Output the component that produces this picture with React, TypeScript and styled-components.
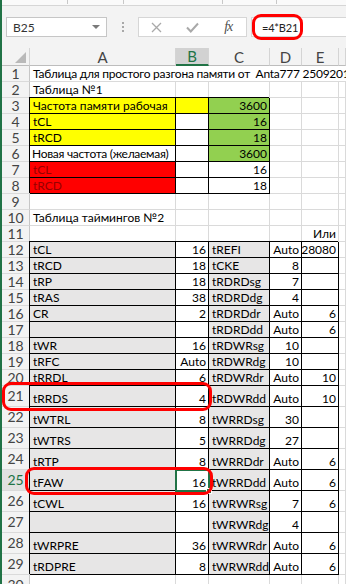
import React from 'react'
import styled, { createGlobalStyle, css } from 'styled-components'

type Align = 'left' | 'right' | 'center'

type CellData = {
  text?: string
  bg?: string
  color?: string
  align?: Align
  boxed?: boolean
  selected?: boolean
  tight?: boolean
}

type RowData = {
  n: number
  wide?: string
  cells: CellData[]
}

const YELLOW = '#ffff00'
const GREEN = '#92d050'
const RED = '#ff0000'
const DARK_RED = '#960000'
const GRAY = '#e7e6e6'
const XL_GREEN = '#217346'

const GlobalStyle = createGlobalStyle`
  *, *::before, *::after { box-sizing: border-box; }
  html, body { margin: 0; padding: 0; background: #fff; }
  body {
    width: 346px;
    height: 584px;
    overflow: hidden;
    font-family: Lato, 'Noto Sans', sans-serif;
  }
`

const Window = styled.div`
  display: flex;
  width: 346px;
  height: 584px;
  overflow: hidden;
`

const GreenEdge = styled.div`
  flex: none;
  width: 2px;
  background: ${XL_GREEN};
`

const Main = styled.div`
  flex: 1;
  min-width: 0;
  display: flex;
  flex-direction: column;
`

const Ribbon = styled.div`
  flex: none;
  height: 48px;
  background: #f3f3f3;
  display: flex;
  flex-direction: column;
`

const RibbonEdge = styled.div`
  height: 6px;
  background: #fafafa;
  border-bottom: 1px solid #d6d6d6;
  display: flex;
`

const GroupTick = styled.div<{ $w: number }>`
  flex: none;
  width: ${(p) => p.$w}px;
  height: 4px;
  border-right: 1px solid #c8c8c8;
`

const FormulaRow = styled.div`
  display: flex;
  align-items: center;
  height: 20px;
  margin-top: 11px;
  padding-left: 4px;
`

const NameBox = styled.div`
  flex: none;
  width: 101px;
  height: 20px;
  background: #fff;
  border: 1px solid #c6c6c6;
  display: flex;
  align-items: center;
  justify-content: space-between;
  padding: 0 6px 0 6px;
  font-size: 12px;
  color: #333;
`

const DropArrow = styled.span`
  width: 0;
  height: 0;
  border-left: 4px solid transparent;
  border-right: 4px solid transparent;
  border-top: 4px solid #7a7a7a;
`

const Grip = styled.div`
  flex: none;
  width: 31px;
  display: flex;
  flex-direction: column;
  align-items: center;
  gap: 2px;
`

const GripDot = styled.span`
  width: 2px;
  height: 2px;
  background: #a8a8a8;
`

const FxButtons = styled.div`
  flex: none;
  width: 109px;
  height: 20px;
  background: #fff;
  border: 1px solid #d6d6d6;
  display: flex;
`

const FxButton = styled.div`
  flex: 1;
  display: flex;
  align-items: center;
  justify-content: center;
`

const FxLabel = styled.span`
  font-family: 'Liberation Serif', serif;
  font-style: italic;
  font-size: 14px;
  color: #505050;
  letter-spacing: -1px;
`

const FormulaInput = styled.div`
  position: relative;
  flex: 1;
  height: 20px;
  margin-left: 4px;
  background: #fff;
  border: 1px solid #d6d6d6;
  border-right: none;
  display: flex;
  align-items: center;
  padding-left: 10px;
  font-size: 11px;
  letter-spacing: -0.2px;
  color: #222;
`

const Annotation = styled.div<{ $left: number; $top: number; $w: number; $h: number }>`
  position: absolute;
  left: ${(p) => p.$left}px;
  top: ${(p) => p.$top}px;
  width: ${(p) => p.$w}px;
  height: ${(p) => p.$h}px;
  border: 3px solid #f00;
  border-radius: 9px;
  pointer-events: none;
  z-index: 3;
`

const Sheet = styled.div`
  position: relative;
  flex: 1;
  display: grid;
  grid-template-columns: 28px 146px 33px 61px 32px 37px 1fr;
  grid-template-rows: 18px repeat(20, 16px) repeat(10, 21px);
  background: #fff;
`

const Corner = styled.div`
  background: #f3f3f3;
  border-right: 1px solid #d4d4d4;
  border-bottom: 1px solid #bdbdbd;
  display: flex;
  align-items: flex-end;
  justify-content: flex-end;
  padding: 0 3px 2px 0;
`

const CornerMark = styled.span`
  width: 0;
  height: 0;
  border-left: 11px solid transparent;
  border-bottom: 11px solid #b9b9b9;
`

const ColHead = styled.div<{ $active?: boolean }>`
  display: flex;
  align-items: center;
  justify-content: center;
  font-size: 15px;
  line-height: 16px;
  background: ${(p) => (p.$active ? '#d2d2d2' : '#f3f3f3')};
  color: ${(p) => (p.$active ? XL_GREEN : '#444')};
  border-right: 1px solid #d4d4d4;
  border-bottom: ${(p) => (p.$active ? `2px solid ${XL_GREEN}` : '1px solid #bdbdbd')};
`

const RowHead = styled.div<{ $active?: boolean }>`
  display: flex;
  align-items: center;
  justify-content: center;
  font-size: 14px;
  line-height: 14px;
  background: ${(p) => (p.$active ? '#e1e1e1' : '#f3f3f3')};
  color: ${(p) => (p.$active ? XL_GREEN : '#444')};
  border-right: 1px solid #c6c6c6;
  border-bottom: 1px solid #dadada;
`

const Cell = styled.div<{
  $bg?: string
  $color?: string
  $align?: Align
  $boxed?: boolean
  $selected?: boolean
  $wide?: boolean
  $tight?: boolean
}>`
  display: flex;
  align-items: flex-end;
  justify-content: ${(p) =>
    p.$align === 'right' ? 'flex-end' : p.$align === 'center' ? 'center' : 'flex-start'};
  padding: 0 2px 0 3px;
  background: ${(p) => p.$bg || '#fff'};
  color: ${(p) => p.$color || '#000'};
  font-size: 12px;
  line-height: 14px;
  white-space: pre;
  overflow: hidden;
  border-right: 1px solid ${(p) => (p.$boxed ? '#000' : '#dadada')};
  border-bottom: 1px solid ${(p) => (p.$boxed ? '#000' : '#dadada')};
  ${(p) =>
    p.$boxed &&
    css`
      box-shadow: -1px -1px 0 #000;
    `}
  ${(p) =>
    p.$tight &&
    css`
      letter-spacing: -0.3px;
      padding-left: 2px;
    `}
  ${(p) =>
    p.$wide &&
    css`
      grid-column: 2 / -1;
      border-right: none;
      letter-spacing: -0.25px;
    `}
  ${(p) =>
    p.$selected &&
    css`
      position: relative;
      z-index: 2;
      overflow: visible;
      outline: 2px solid ${XL_GREEN};
      outline-offset: -1px;
      &::after {
        content: '';
        position: absolute;
        right: -4px;
        bottom: -4px;
        width: 6px;
        height: 6px;
        background: ${XL_GREEN};
        border: 1px solid #fff;
      }
    `}
`

const num = (text: string, extra: CellData = {}): CellData => ({ text, align: 'right', ...extra })

const timings: string[][] = [
  ['tCL', '16', 'tREFI', 'Auto', '28080'],
  ['tRCD', '18', 'tCKE', '8', ''],
  ['tRP', '18', 'tRDRDsg', '7', ''],
  ['tRAS', '38', 'tRDRDdg', '4', ''],
  ['CR', '2', 'tRDRDdr', 'Auto', '6'],
  ['', '', 'tRDRDdd', 'Auto', '6'],
  ['tWR', '16', 'tRDWRsg', '10', ''],
  ['tRFC', 'Auto', 'tRDWRdg', '10', ''],
  ['tRRDL', '6', 'tRDWRdr', 'Auto', '10'],
  ['tRRDS', '4', 'tRDWRdd', 'Auto', '10'],
  ['tWTRL', '8', 'tWRRDsg', '30', ''],
  ['tWTRS', '5', 'tWRRDdg', '27', ''],
  ['tRTP', '8', 'tWRRDdr', 'Auto', '6'],
  ['tFAW', '16', 'tWRRDdd', 'Auto', '6'],
  ['tCWL', '16', 'tWRWRsg', '7', '6'],
  ['', '', 'tWRWRdg', '4', ''],
  ['tWRPRE', '36', 'tWRWRdr', 'Auto', '6'],
  ['tRDPRE', '8', 'tWRWRdd', 'Auto', '6'],
]

const empty = (count: number): CellData[] => Array.from({ length: count }, () => ({}))

const rows: RowData[] = [
  { n: 1, wide: 'Таблица для простого разгона памяти от  Anta777 25092019', cells: [] },
  { n: 2, cells: [{ text: 'Таблица №1' }, ...empty(5)] },
  {
    n: 3,
    cells: [
      { text: 'Частота памяти рабочая', bg: YELLOW, boxed: true },
      { bg: YELLOW, boxed: true },
      num('3600', { bg: GREEN, boxed: true }),
      ...empty(3),
    ],
  },
  {
    n: 4,
    cells: [{ text: 'tCL', bg: YELLOW, boxed: true }, { boxed: true }, num('16', { bg: GREEN, boxed: true }), ...empty(3)],
  },
  {
    n: 5,
    cells: [{ text: 'tRCD', bg: YELLOW, boxed: true }, { boxed: true }, num('18', { bg: GREEN, boxed: true }), ...empty(3)],
  },
  {
    n: 6,
    cells: [
      { text: 'Новая частота (желаемая)', boxed: true, tight: true },
      { boxed: true },
      num('3600', { bg: GREEN, boxed: true }),
      ...empty(3),
    ],
  },
  {
    n: 7,
    cells: [{ text: 'tCL', bg: RED, color: DARK_RED, boxed: true }, { boxed: true }, num('16', { boxed: true }), ...empty(3)],
  },
  {
    n: 8,
    cells: [{ text: 'tRCD', bg: RED, color: DARK_RED, boxed: true }, { boxed: true }, num('18', { boxed: true }), ...empty(3)],
  },
  { n: 9, cells: empty(6) },
  { n: 10, cells: [{ text: 'Таблица таймингов №2' }, ...empty(5)] },
  { n: 11, cells: [...empty(4), num('Или'), {}] },
  ...timings.map(([a, b, c, d, e], i) => ({
    n: 12 + i,
    cells: [
      { text: a, bg: GRAY, boxed: true },
      num(b, { boxed: true, selected: 12 + i === 25 }),
      { text: c, bg: GRAY, boxed: true },
      num(d, { boxed: true }),
      num(e, { boxed: true }),
      {},
    ],
  })),
  { n: 30, cells: empty(6) },
]

const columns = ['A', 'B', 'C', 'D', 'E', '']

const CrossIcon = () => (
  <svg width="11" height="11" viewBox="0 0 11 11">
    <path d="M1 1 L10 10 M10 1 L1 10" stroke="#a9a9a9" strokeWidth="1.3" fill="none" />
  </svg>
)

const CheckIcon = () => (
  <svg width="13" height="11" viewBox="0 0 13 11">
    <path d="M1 5.5 L4.8 9.5 L12 1.5" stroke="#a9a9a9" strokeWidth="2" fill="none" />
  </svg>
)

const FormulaBar = () => (
  <Ribbon>
    <RibbonEdge>
      <GroupTick $w={66} />
      <GroupTick $w={56} />
      <GroupTick $w={99} />
      <GroupTick $w={54} />
    </RibbonEdge>
    <FormulaRow>
      <NameBox>
        B25
        <DropArrow />
      </NameBox>
      <Grip>
        <GripDot />
        <GripDot />
        <GripDot />
      </Grip>
      <FxButtons>
        <FxButton>
          <CrossIcon />
        </FxButton>
        <FxButton>
          <CheckIcon />
        </FxButton>
        <FxButton>
          <FxLabel>fx</FxLabel>
        </FxButton>
      </FxButtons>
      <FormulaInput>
        =4*B21
        <Annotation $left={0} $top={-4} $w={51} $h={26} />
      </FormulaInput>
    </FormulaRow>
  </Ribbon>
)

export default function App() {
  return (
    <>
      <GlobalStyle />
      <Window>
        <GreenEdge />
        <Main>
          <FormulaBar />
          <Sheet>
            <Corner>
              <CornerMark />
            </Corner>
            {columns.map((c) => (
              <ColHead key={c || 'F'} $active={c === 'B'}>
                {c}
              </ColHead>
            ))}
            {rows.map((row) => (
              <React.Fragment key={row.n}>
                <RowHead $active={row.n === 25}>{row.n}</RowHead>
                {row.wide && <Cell $wide>{row.wide}</Cell>}
                {row.cells.map((cell, i) => (
                  <Cell
                    key={i}
                    $bg={cell.bg}
                    $color={cell.color}
                    $align={cell.align}
                    $boxed={cell.boxed}
                    $selected={cell.selected}
                    $tight={cell.tight}
                  >
                    {cell.text}
                  </Cell>
                ))}
              </React.Fragment>
            ))}
            <Annotation $left={0} $top={334} $w={210} $h={29} />
            <Annotation $left={23} $top={419} $w={188} $h={28} />
          </Sheet>
        </Main>
      </Window>
    </>
  )
}
